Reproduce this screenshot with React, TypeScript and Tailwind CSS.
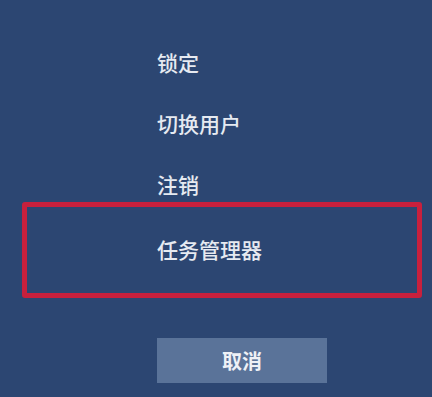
export default function App() {
  const font = { fontFamily: '"Noto Sans CJK SC", "Noto Sans", sans-serif' };
  return (
    <div className="w-[432px] h-[397px] bg-[#2c4672] overflow-hidden" style={font}>
      <div className="flex flex-col pt-[44px]">
        <div className="flex flex-col gap-[25px] pl-[157px]">
          <div className="h-[36px] leading-[36px] text-[21px] font-medium text-[#e6eaf1]">锁定</div>
          <div className="h-[36px] leading-[36px] text-[21px] font-medium text-[#e6eaf1]">切换用户</div>
          <div className="h-[36px] leading-[36px] text-[21px] font-medium text-[#e6eaf1]">注销</div>
        </div>
        <div className="ml-[22px] mr-[10px] h-[96px] border-[5px] border-[#c8203d] rounded-[3px] flex items-center pl-[130px]">
          <span className="text-[21px] font-medium text-[#e6eaf1]">任务管理器</span>
        </div>
        <div className="mt-[40px] ml-[157px] w-[170px] h-[45px] bg-[#5a7399] flex items-center justify-center">
          <span className="text-[20px] font-bold text-[#eef1f6]">取消</span>
        </div>
      </div>
    </div>
  );
}
